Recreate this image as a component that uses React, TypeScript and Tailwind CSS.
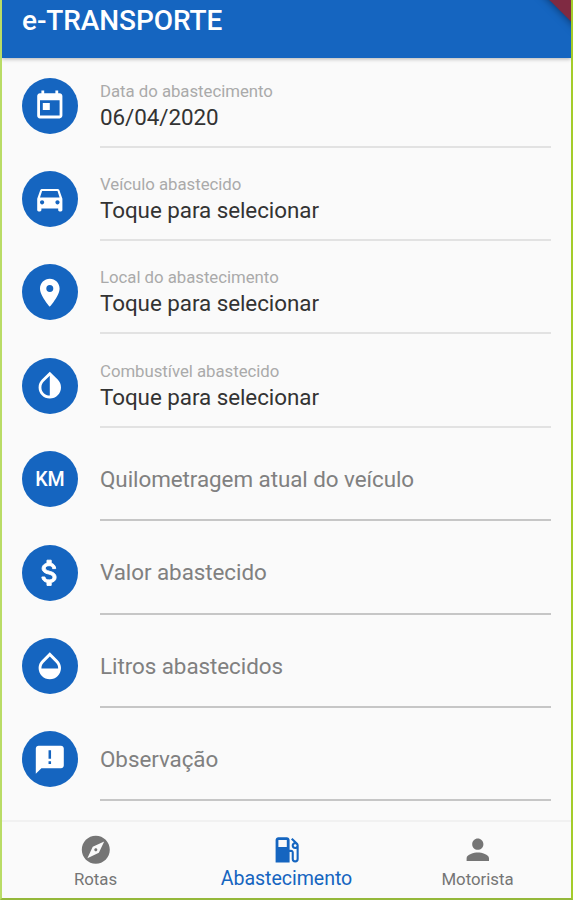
import type { ComponentType } from "react";
import {
  MdToday,
  MdDirectionsCar,
  MdLocationOn,
  MdInvertColors,
  MdOpacity,
  MdExplore,
  MdLocalGasStation,
  MdPerson,
} from "react-icons/md";

type Icon = ComponentType<{ className?: string }>;

type Field = {
  label: string;
  value?: string;
  icon?: Icon;
};

function DollarIcon({ className }: { className?: string }) {
  return (
    <svg viewBox="0 0 24 24" className={className} fill="currentColor" stroke="currentColor" strokeWidth="0.7" strokeLinejoin="round">
      <path d="M11.8 10.9c-2.27-.59-3-1.2-3-2.15 0-1.09 1.01-1.85 2.7-1.85 1.78 0 2.44.85 2.5 2.1h2.21c-.07-1.72-1.12-3.3-3.21-3.81V3h-3v2.16c-1.94.42-3.5 1.68-3.5 3.61 0 2.31 1.91 3.46 4.7 4.13 2.5.6 3 1.48 3 2.41 0 .69-.49 1.79-2.7 1.79-2.06 0-2.87-.92-2.98-2.1h-2.2c.12 2.19 1.76 3.42 3.68 3.83V21h3v-2.15c1.95-.37 3.5-1.5 3.5-3.55 0-2.84-2.43-3.81-4.7-4.4z" />
    </svg>
  );
}

function FeedbackIcon({ className }: { className?: string }) {
  return (
    <svg viewBox="0 0 24 24" className={className} fill="currentColor">
      <path
        fillRule="evenodd"
        d="M20 2H4c-1.1 0-1.99.9-1.99 2L2 22l4-4h14c1.1 0 2-.9 2-2V4c0-1.1-.9-2-2-2zM11.1 5.2h1.8v6h-1.8zM11.1 13h1.8v2h-1.8z"
      />
    </svg>
  );
}

const fields: Field[] = [
  { label: "Data do abastecimento", value: "06/04/2020", icon: MdToday },
  { label: "Veículo abastecido", value: "Toque para selecionar", icon: MdDirectionsCar },
  { label: "Local do abastecimento", value: "Toque para selecionar", icon: MdLocationOn },
  { label: "Combustível abastecido", value: "Toque para selecionar", icon: MdInvertColors },
  { label: "Quilometragem atual do veículo" },
  { label: "Valor abastecido", icon: DollarIcon },
  { label: "Litros abastecidos", icon: MdOpacity },
  { label: "Observação", icon: FeedbackIcon },
];

function FieldRow({ label, value, icon: RowIcon }: Field) {
  return (
    <div className="flex h-[93.43px] gap-[22px] pr-[20px] pl-[20px]">
      <div className="mt-[19px] flex size-[56px] shrink-0 items-center justify-center rounded-full bg-[#1565c0] text-white">
        {RowIcon ? (
          <RowIcon className="size-[33.6px]" />
        ) : (
          <span className="mt-[2px] text-[19.6px] leading-none font-medium">KM</span>
        )}
      </div>
      {value ? (
        <div className="flex h-[89px] flex-1 flex-col border-b-2 border-[#e2e2e2] pt-[22px]">
          <span className="text-[16.8px] leading-[20px] tracking-[-0.03px] text-[#aaaaaa]">{label}</span>
          <span className="mt-[2px] text-[22.4px] leading-[28px] tracking-[-0.05px] text-[#333333]">{value}</span>
        </div>
      ) : (
        <div className="flex h-[89px] flex-1 flex-col border-b-2 border-[#c6c6c6] pt-[32.5px]">
          <span className="text-[22.4px] leading-[28px] tracking-[-0.05px] text-[#808080]">{label}</span>
        </div>
      )}
    </div>
  );
}

export default function App() {
  return (
    <div className="relative flex h-[900px] w-[573px] flex-col overflow-hidden border-x-2 border-b-2 border-l-[#b9dc66] border-r-[#a4cc2a] border-b-[#94b83a] bg-[#fafafa] font-['Roboto',sans-serif]">
      <header className="relative z-10 h-[58px] shrink-0 bg-[#1565c0] pt-[4px] pl-[20px] shadow-[0_1px_4px_rgba(0,0,0,0.3)]">
        <h1 className="text-[28px] leading-[33px] font-medium tracking-[-0.09px] text-white">e-TRANSPORTE</h1>
        <div className="absolute inset-0 overflow-hidden">
          <div className="absolute -top-[37px] -right-[37px] size-[56px] rotate-45 bg-[#7f2a42] shadow-[0_0_8px_rgba(0,0,0,0.5)]" />
        </div>
      </header>
      <main className="flex-1 pt-[0.5px]">
        {fields.map((field) => (
          <FieldRow key={field.label} {...field} />
        ))}
      </main>
      <nav className="-mx-[2px] grid h-[78px] shrink-0 grid-cols-3 border-t-2 border-[#f1f1f1] text-[#757575]">
        <div className="flex flex-col items-center pt-[11px]">
          <MdExplore className="size-[33.6px]" />
          <span className="mt-[2px] text-[16.8px] leading-[20px]">Rotas</span>
        </div>
        <div className="flex flex-col items-center pt-[11px] text-[#1565c0]">
          <MdLocalGasStation className="size-[33.6px]" />
          <span className="text-[19.6px] leading-[24px] tracking-[-0.05px]">Abastecimento</span>
        </div>
        <div className="flex flex-col items-center pt-[11px]">
          <MdPerson className="size-[33.6px]" />
          <span className="mt-[2px] text-[16.8px] leading-[20px]">Motorista</span>
        </div>
      </nav>
    </div>
  );
}
